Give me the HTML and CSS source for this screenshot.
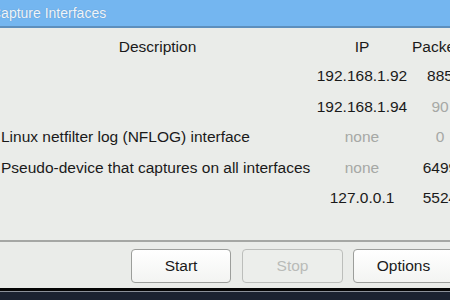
FILE: index.html
```html
<!DOCTYPE html>
<html lang="en">
<head>
  <meta charset="UTF-8" />
  <title>Capture Interfaces</title>
  <link rel="stylesheet" href="styles.css">
</head>
<body>
  <div class="window">
    <div class="titlebar"><span class="title">Capture Interfaces</span></div>

    <div class="iface-table">
      <div class="row head">
        <div class="desc">Description</div>
        <div class="ip">IP</div>
        <div class="pkts">Packets</div>
      </div>
      <div class="row">
        <div class="desc"></div>
        <div class="ip">192.168.1.92</div>
        <div class="pkts">885</div>
      </div>
      <div class="row">
        <div class="desc"></div>
        <div class="ip">192.168.1.94</div>
        <div class="pkts dim">90</div>
      </div>
      <div class="row">
        <div class="desc">Linux netfilter log (NFLOG) interface</div>
        <div class="ip dim">none</div>
        <div class="pkts dim">0</div>
      </div>
      <div class="row">
        <div class="desc">Pseudo-device that captures on all interfaces</div>
        <div class="ip dim">none</div>
        <div class="pkts">6499</div>
      </div>
      <div class="row">
        <div class="desc"></div>
        <div class="ip">127.0.0.1</div>
        <div class="pkts">5524</div>
      </div>
    </div>

    <div class="button-bar">
      <button class="btn btn-start">Start</button>
      <button class="btn btn-stop" disabled>Stop</button>
      <button class="btn btn-options">Options</button>
    </div>
  </div>
  <div class="desktop"></div>
</body>
</html>
```

FILE: styles.css
```css
html, body {
  margin: 0;
  padding: 0;
}
body {
  width: 450px;
  height: 300px;
  overflow: hidden;
  background: #1b2230;
  font-family: "Liberation Sans", Arial, sans-serif;
  color: #1a1a1a;
}
.window {
  background: #eaece9;
  height: 288px;
  border-bottom: 3px solid #050505;
  display: flex;
  flex-direction: column;
  overflow: hidden;
}
.titlebar {
  height: 26px;
  background: #74b6f0;
  border-bottom: 2px solid #5d8fbd;
  overflow: hidden;
  white-space: nowrap;
}
.title {
  display: inline-block;
  margin-left: -9px;
  margin-top: 5px;
  font-size: 14px;
  color: #eef5fc;
  text-shadow: 0 0 1px #5a88b4;
}

.iface-table {
  padding-top: 5px;
  font-size: 15.5px;
}
.row {
  display: grid;
  grid-template-columns: 314px 96px 60px;
  height: 30.5px;
  align-items: center;
  white-space: nowrap;
}
.row.head {
  height: 28px;
}
.desc {
  padding-left: 1px;
}
.head .desc {
  text-align: center;
}
.ip {
  text-align: center;
}
.pkts {
  text-align: center;
}
.head .pkts {
  text-align: left;
  padding-left: 2px;
}
.dim {
  color: #a6a8a5;
}

.button-bar {
  margin-top: auto;
  border-top: 2px solid #a5a7a4;
  height: 48px;
  display: flex;
  align-items: flex-start;
  padding-top: 7px;
  padding-left: 131px;
  box-sizing: border-box;
}
.btn {
  height: 34px;
  box-sizing: border-box;
  font-family: "Liberation Sans", Arial, sans-serif;
  font-size: 15.5px;
  color: #1a1a1a;
  background: linear-gradient(#ffffff, #f3f4f2);
  border: 1px solid #9c9e9b;
  border-radius: 4px;
  padding: 0;
  flex: none;
}
.btn-start {
  width: 100px;
}
.btn-stop {
  width: 101px;
  margin-left: 11px;
  color: #b9bbb8;
  background: #eceeeb;
  border-color: #bcbebb;
}
.btn-options {
  width: 101px;
  margin-left: 10px;
}

.desktop {
  height: 9px;
  border-top: 1px solid #8a8f98;
  background: #1b2230;
}
```
